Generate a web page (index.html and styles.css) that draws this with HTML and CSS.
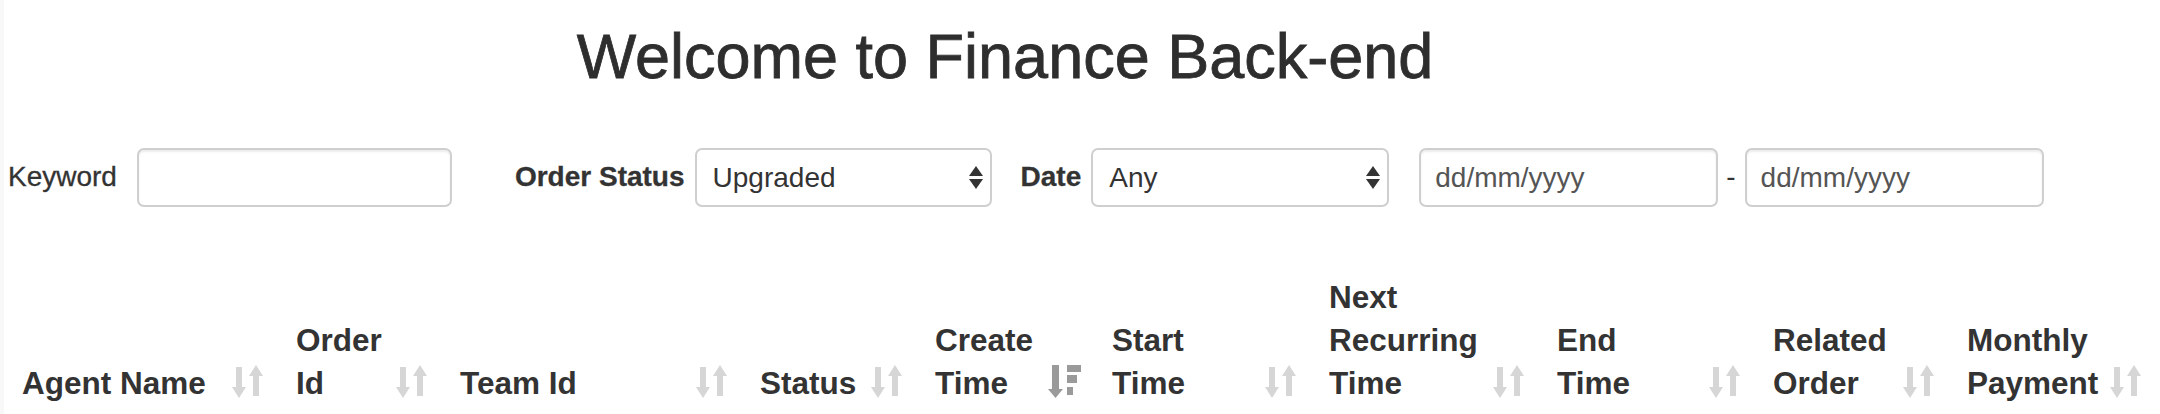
FILE: index.html
```html
<!DOCTYPE html>
<html lang="en">
<head>
<meta charset="utf-8">
<title>Finance Back-end</title>
<link rel="stylesheet" href="styles.css">
</head>
<body>
<svg class="defs" width="0" height="0" aria-hidden="true">
  <symbol id="i-sort" viewBox="0 0 31 33">
    <path d="M4 2h6v20h4L7 33 0 22h4z M21 31h6V11h4L24 0 17 11h4z"/>
  </symbol>
  <symbol id="i-sort-desc" viewBox="0 0 33 33">
    <path d="M4 0h7v24h4l-7.5 9L0 24h4z M19 0h14v7H19z M19 10h10v8H19z M19 22h6v8h-6z"/>
  </symbol>
</svg>
<div class="page">
  <h1 class="title">Welcome to Finance Back-end</h1>

  <form class="filters">
    <label class="lbl" for="kw">Keyword</label>
    <input id="kw" class="control text keyword" type="text">

    <label class="lbl strong status-lbl" for="st">Order Status</label>
    <span class="select-wrap status-sel"><select id="st" class="control select"><option>Upgraded</option></select></span>

    <label class="lbl strong date-lbl" for="dt">Date</label>
    <span class="select-wrap date-sel"><select id="dt" class="control select"><option>Any</option></select></span>

    <input class="control text date from" type="text" placeholder="dd/mm/yyyy">
    <span class="dash">-</span>
    <input class="control text date" type="text" placeholder="dd/mm/yyyy">
  </form>

  <table class="orders">
    <colgroup>
      <col class="w-agent"><col class="w-order"><col class="w-team"><col class="w-status"><col class="w-create">
      <col class="w-start"><col class="w-next"><col class="w-end"><col class="w-related"><col class="w-monthly">
    </colgroup>
    <thead>
      <tr>
        <th>Agent Name<svg class="sort"><use href="#i-sort"/></svg></th>
        <th>Order<br>Id<svg class="sort"><use href="#i-sort"/></svg></th>
        <th>Team Id<svg class="sort"><use href="#i-sort"/></svg></th>
        <th>Status<svg class="sort"><use href="#i-sort"/></svg></th>
        <th>Create<br>Time<svg class="sort active"><use href="#i-sort-desc"/></svg></th>
        <th>Start<br>Time<svg class="sort"><use href="#i-sort"/></svg></th>
        <th>Next<br>Recurring<br>Time<svg class="sort"><use href="#i-sort"/></svg></th>
        <th>End<br>Time<svg class="sort"><use href="#i-sort"/></svg></th>
        <th>Related<br>Order<svg class="sort"><use href="#i-sort"/></svg></th>
        <th>Monthly<br>Payment<svg class="sort"><use href="#i-sort"/></svg></th>
      </tr>
    </thead>
  </table>
</div>
</body>
</html>
```
FILE: styles.css
```css
html, body {
  margin: 0;
  padding: 0;
  background: #fff;
}

body {
  font-family: "Liberation Sans", Arial, Helvetica, sans-serif;
  color: #333;
  width: 2160px;
  height: 414px;
  overflow: hidden;
}

.defs {
  position: absolute;
  width: 0;
  height: 0;
  overflow: hidden;
}

.page {
  border-left: 4px solid #f8f8f8;
  padding-left: 4px;
  min-height: 414px;
  box-sizing: border-box;
}

.title {
  margin: 0 158px 0 0;
  padding-top: 22px;
  font-size: 63px;
  font-weight: 500;
  line-height: 1.1;
  text-align: center;
  color: #2e2e2e;
  -webkit-text-stroke: 0.8px #2e2e2e;
}

/* ---------- filters ---------- */
.filters {
  display: flex;
  align-items: center;
  margin-top: 57px;
  height: 59px;
}

.lbl {
  font-size: 28px;
  line-height: 40px;
  white-space: nowrap;
  margin-top: -2px;
  -webkit-text-stroke: 0.3px #333;
}

.lbl.strong {
  font-weight: bold;
}

.control {
  box-sizing: border-box;
  height: 59px;
  border: 2px solid #cfcfcf;
  border-radius: 7px;
  background: #fff;
  font-family: "Liberation Sans", Arial, Helvetica, sans-serif;
  font-size: 28px;
  margin: 0;
}

.text {
  padding: 0 14px;
  color: #555;
  box-shadow: inset 0 2px 2px rgba(0, 0, 0, 0.075);
}

.text::placeholder {
  color: #555;
  opacity: 1;
}

.keyword {
  width: 315px;
  margin-left: 20px;
}

.status-lbl {
  margin-left: 63px;
}

.date-lbl {
  margin-left: 29px;
}

.select-wrap {
  position: relative;
  display: block;
  margin-left: 10px;
}

.select {
  display: block;
  appearance: none;
  -webkit-appearance: none;
  padding: 0 40px 0 16px;
  color: #333;
  outline: none;
}

.status-sel .select {
  width: 297px;
}

.date-sel .select {
  width: 298px;
}

.select-wrap::before,
.select-wrap::after {
  content: "";
  position: absolute;
  right: 9px;
  width: 0;
  height: 0;
  border-left: 7px solid transparent;
  border-right: 7px solid transparent;
  pointer-events: none;
}

.select-wrap::before {
  top: 18px;
  border-bottom: 10px solid #333;
}

.select-wrap::after {
  top: 31px;
  border-top: 10px solid #333;
}

.date {
  width: 299px;
}

.date.from {
  margin-left: 30px;
}

.dash {
  font-size: 28px;
  color: #333;
  margin: -2px 9px 0 8px;
}

/* ---------- table ---------- */
.orders {
  margin-top: 55px;
  width: 2152px;
  table-layout: fixed;
  border-collapse: collapse;
}

.w-agent { width: 274px; }
.w-order { width: 164px; }
.w-team { width: 300px; }
.w-status { width: 175px; }
.w-create { width: 177px; }
.w-start { width: 217px; }
.w-next { width: 228px; }
.w-end { width: 216px; }
.w-related { width: 194px; }
.w-monthly { width: 207px; }

.orders th {
  position: relative;
  padding: 14px 52px 14px 14px;
  font-size: 31.5px;
  line-height: 43px;
  font-weight: bold;
  text-align: left;
  vertical-align: bottom;
  color: #333;
  border-bottom: 3px solid #ddd;
}

.sort {
  position: absolute;
  right: 19px;
  bottom: 21px;
  width: 31px;
  height: 33px;
  fill: #d6d6d6;
}

.sort.active {
  right: 17px;
  width: 33px;
  fill: #9a9a9a;
}
```
